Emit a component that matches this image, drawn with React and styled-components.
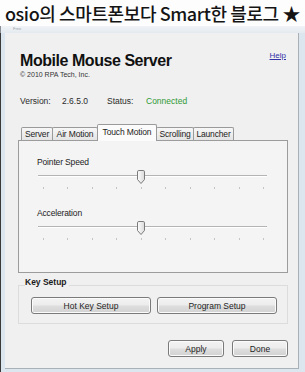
import React from "react";
import styled, { createGlobalStyle } from "styled-components";

const Global = createGlobalStyle`
  html, body { margin: 0; padding: 0; }
  body {
    width: 305px; height: 372px; overflow: hidden;
    background: #ffffff;
    font-family: "Liberation Sans", Arial, sans-serif;
  }
  #root { width: 305px; height: 372px; }
`;

const Page = styled.div`
  width: 305px;
  height: 372px;
  display: flex;
  flex-direction: column;
`;

const Banner = styled.div`
  height: 26px;
  background: #fdfdfd;
  padding-left: 5px;
  font-family: "Noto Sans CJK KR", "Noto Sans", sans-serif;
  font-size: 18px;
  font-weight: 500;
  letter-spacing: -0.4px;
  line-height: 27px;
  color: #141414;
  white-space: nowrap;
  overflow: hidden;
`;

const TitleStrip = styled.div`
  height: 7px;
  background: linear-gradient(#f1f4f7, #e4eaf0);
  border-left: 1px solid #8a9096;
  padding-left: 12px;
  font-size: 4px;
  line-height: 6px;
  color: #9aa0a6;
  overflow: hidden;
`;

const Frame = styled.div`
  flex: 1;
  display: flex;
  border-left: 1px solid #3a3a3a;
  padding: 0 6px 3px 4px;
  background: #dbe6ef;
`;

const Client = styled.div`
  flex: 1;
  box-sizing: border-box;
  background: #f0f0f0;
  border-right: 1px solid #a9b0b6;
  border-bottom: 1px solid #a9b0b6;
  padding: 19px 10px 0 13px;
  display: flex;
  flex-direction: column;
  color: #1e1e1e;
`;

const HeaderRow = styled.div`
  display: flex;
  justify-content: space-between;
  align-items: flex-start;
  padding-left: 2px;
`;

const Title = styled.div`
  font-size: 16px;
  font-weight: bold;
  line-height: 18px;
  letter-spacing: -0.45px;
  color: #111;
`;

const HelpLink = styled.a`
  font-size: 8px;
  line-height: 10px;
  margin-top: -1px;
  margin-right: 2px;
  color: #3333a8;
  text-decoration: underline;
`;

const Copyright = styled.div`
  padding-left: 2px;
  font-size: 7px;
  line-height: 9px;
  color: #333;
`;

const InfoRow = styled.div`
  margin-top: 17px;
  padding-left: 2px;
  display: grid;
  grid-template-columns: 42px 45px 39px auto;
  font-size: 8.5px;
  line-height: 11px;
  color: #2a2a2a;
`;

const Value = styled.span`
  color: ${(p) => p.$color || "#2a2a2a"};
`;

const TabStrip = styled.div`
  margin-top: 17px;
  height: 16px;
  padding-left: 3px;
  display: flex;
  align-items: flex-end;
`;

const Tab = styled.div`
  box-sizing: border-box;
  width: ${(p) => p.$w}px;
  height: ${(p) => (p.$active ? 17 : 13)}px;
  margin-left: ${(p) => (p.$first ? 0 : -1)}px;
  margin-bottom: ${(p) => (p.$active ? -1 : 0)}px;
  position: relative;
  z-index: ${(p) => (p.$active ? 2 : 1)};
  border: 1px solid #9a9a9a;
  border-bottom: none;
  border-radius: 2px 2px 0 0;
  background: ${(p) =>
    p.$active ? "#fbfbfb" : "linear-gradient(#f7f7f7, #e4e4e4)"};
  text-align: center;
  font-size: 8.5px;
  letter-spacing: -0.15px;
  line-height: ${(p) => (p.$active ? 14 : 12)}px;
  color: #222;
  white-space: nowrap;
`;

const Panel = styled.div`
  box-sizing: border-box;
  height: 133px;
  border: 1px solid #9c9c9c;
  background: #f4f4f4;
  padding: 16px 0 0 18px;
  display: flex;
  flex-direction: column;
`;

const FieldLabel = styled.div`
  font-size: 8.5px;
  line-height: 11px;
  letter-spacing: -0.15px;
  color: #222;
  margin-top: ${(p) => p.$mt || 0}px;
`;

const SliderBox = styled.div`
  position: relative;
  width: 229px;
  height: 20px;
  margin: 2px 0 0 1px;
`;

const Track = styled.div`
  margin-top: 5px;
  height: 1px;
  background: #b4b4b4;
  border-bottom: 1px solid #ffffff;
`;

const Ticks = styled.div`
  margin: 10px 3px 0 5px;
  display: flex;
  justify-content: space-between;
`;

const Tick = styled.span`
  width: 1px;
  height: 2px;
  background: #c4c4c4;
`;

const ThumbWrap = styled.div`
  position: absolute;
  top: 0;
  width: 8px;
  height: 14px;
`;

const Fieldset = styled.fieldset`
  margin: 4px 0 0 0;
  padding: 3px 0 9px 6px;
  border: 1px solid #dcdcdc;
  min-width: 0;
`;

const Legend = styled.legend`
  padding: 0 2px 6px 0;
  font-size: 8.5px;
  font-weight: bold;
  line-height: 11px;
  color: #1a1a1a;
`;

const ButtonRow = styled.div`
  display: flex;
  gap: ${(p) => p.$gap}px;
  justify-content: ${(p) => p.$justify || "flex-start"};
  margin-left: ${(p) => p.$ml || 0}px;
  margin-top: ${(p) => p.$mt || 0}px;
`;

const Button = styled.button`
  box-sizing: border-box;
  width: ${(p) => p.$w}px;
  height: 17px;
  padding: 0;
  border: 1px solid #7a7a7a;
  border-radius: 3px;
  background: linear-gradient(#f3f3f3 0%, #ececec 48%, #dedede 52%, #d2d2d2 100%);
  box-shadow: inset 0 0 0 1px #fbfbfb;
  font-family: "Liberation Sans", Arial, sans-serif;
  font-size: 8.5px;
  color: #1e1e1e;
`;

function Thumb() {
  return (
    <svg width="8" height="14" viewBox="0 0 8 14">
      <defs>
        <linearGradient id="tg" x1="0" x2="1" y1="0" y2="0">
          <stop offset="0" stopColor="#fdfdfd" />
          <stop offset="1" stopColor="#dadada" />
        </linearGradient>
      </defs>
      <path
        d="M1.8 0.5 H6.2 Q7.5 0.5 7.5 1.8 V9.5 L4 13.5 L0.5 9.5 V1.8 Q0.5 0.5 1.8 0.5 Z"
        fill="url(#tg)"
        stroke="#7b7b7b"
        strokeWidth="1"
      />
    </svg>
  );
}

function Slider({ value, steps = 10 }) {
  const span = 229 - 5 - 3 - 1;
  const center = 5 + (value / (steps - 1)) * span;
  return (
    <SliderBox>
      <Track />
      <Ticks>
        {Array.from({ length: steps }).map((_, i) => (
          <Tick key={i} />
        ))}
      </Ticks>
      <ThumbWrap style={{ left: Math.round(center - 3.5) }}>
        <Thumb />
      </ThumbWrap>
    </SliderBox>
  );
}

const tabs = [
  { label: "Server", w: 32 },
  { label: "Air Motion", w: 46 },
  { label: "Touch Motion", w: 60, active: true },
  { label: "Scrolling", w: 38 },
  { label: "Launcher", w: 41 },
];

export default function App() {
  return (
    <Page>
      <Global />
      <Banner>osio의 스마트폰보다 Smart한 블로그 ★</Banner>
      <TitleStrip>Free</TitleStrip>
      <Frame>
        <Client>
          <HeaderRow>
            <Title>Mobile Mouse Server</Title>
            <HelpLink href="#">Help</HelpLink>
          </HeaderRow>
          <Copyright>© 2010 RPA Tech, Inc.</Copyright>
          <InfoRow>
            <span>Version:</span>
            <Value>2.6.5.0</Value>
            <span>Status:</span>
            <Value $color="#2f9a35">Connected</Value>
          </InfoRow>
          <TabStrip>
            {tabs.map((t, i) => (
              <Tab key={t.label} $w={t.w} $active={t.active} $first={i === 0}>
                {t.label}
              </Tab>
            ))}
          </TabStrip>
          <Panel>
            <FieldLabel>Pointer Speed</FieldLabel>
            <Slider value={4} />
            <FieldLabel $mt={18}>Acceleration</FieldLabel>
            <Slider value={4} />
          </Panel>
          <Fieldset>
            <Legend>Key Setup</Legend>
            <ButtonRow $gap={6} $ml={6}>
              <Button $w={120}>Hot Key Setup</Button>
              <Button $w={120}>Program Setup</Button>
            </ButtonRow>
          </Fieldset>
          <ButtonRow $gap={8} $justify="flex-end" $mt={16}>
            <Button $w={56}>Apply</Button>
            <Button $w={56}>Done</Button>
          </ButtonRow>
        </Client>
      </Frame>
    </Page>
  );
}
